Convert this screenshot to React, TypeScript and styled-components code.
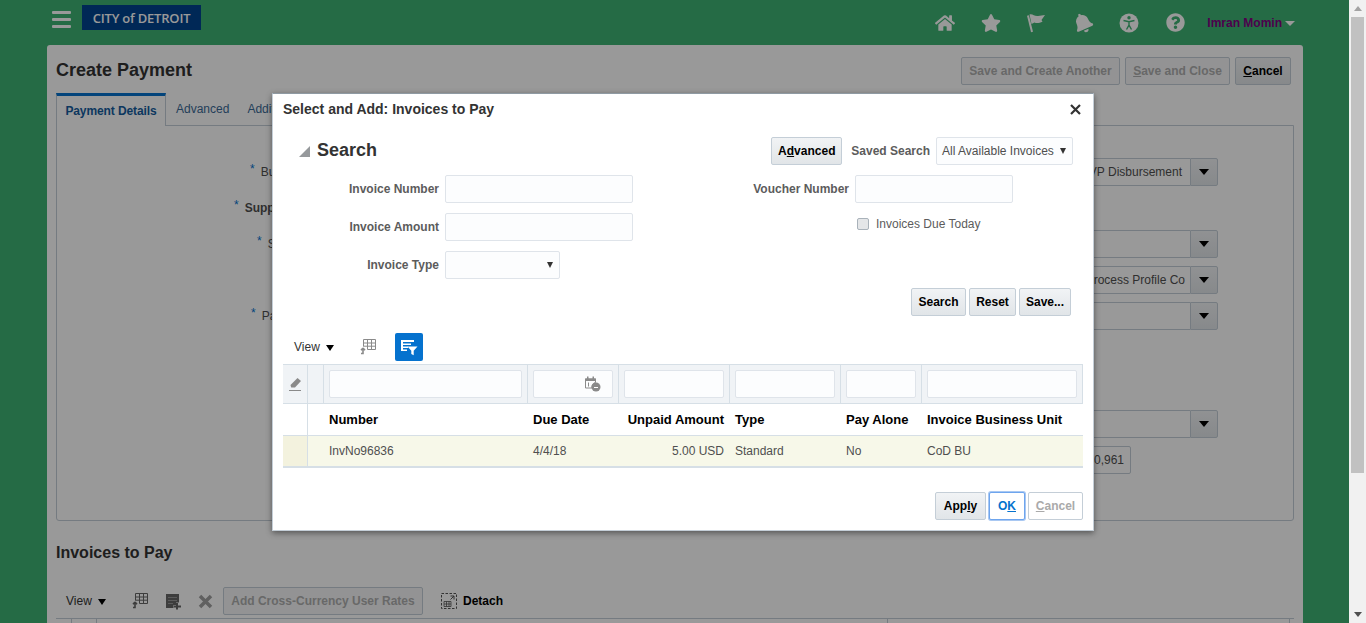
import React from "react";
import styled, { createGlobalStyle } from "styled-components";
import { FaHome, FaStar, FaBell, FaQuestionCircle } from "react-icons/fa";

const GlobalStyle = createGlobalStyle`
  html, body {
    margin: 0;
    padding: 0;
    overflow: hidden;
  }
  body {
    font-family: "Liberation Sans", Arial, sans-serif;
    font-size: 12px;
    color: #333;
  }
  * {
    box-sizing: border-box;
  }
`;

const Page = styled.div`
  display: flex;
  width: 1366px;
  height: 623px;
  overflow: hidden;
`;

const Main = styled.div`
  position: relative;
  flex: 1;
  padding: 0 46px 0 47px;
  background-color: #3eb273;
  overflow: hidden;
`;

const Scrollbar = styled.div`
  display: flex;
  flex-direction: column;
  align-items: center;
  width: 17px;
  background-color: #f1f1f1;
`;

const ScrollArrow = styled.div<{ $down?: boolean }>`
  display: flex;
  align-items: center;
  justify-content: center;
  height: 17px;
  flex: none;
  &::after {
    content: "";
    border-left: 4px solid transparent;
    border-right: 4px solid transparent;
    ${(p) =>
      p.$down
        ? "border-top: 5px solid #505050;"
        : "border-bottom: 5px solid #a3a3a3;"}
  }
`;

const ScrollThumb = styled.div`
  width: 13px;
  height: 456px;
  background-color: #c1c1c1;
`;

const ScrollTrack = styled.div`
  flex: 1;
`;

const Header = styled.header`
  display: flex;
  align-items: flex-start;
  height: 45px;
  color: #fff;
`;

const MenuButton = styled.div`
  display: flex;
  flex-direction: column;
  gap: 4px;
  width: 19px;
  margin: 11px 0 0 5px;
  span {
    display: block;
    height: 3px;
    border-radius: 1px;
    background-color: #fff;
  }
`;

const Logo = styled.div`
  display: flex;
  align-items: center;
  justify-content: center;
  width: 119px;
  height: 25px;
  margin: 5px 0 0 11px;
  background-color: #004390;
  color: #fff;
  font-family: "Open Sans", sans-serif;
  font-size: 13px;
  font-weight: 600;
  letter-spacing: -0.2px;
`;

const HeaderIcons = styled.nav`
  display: flex;
  align-items: center;
  height: 45px;
  margin-left: auto;
`;

const HeaderIcon = styled.div`
  display: flex;
  align-items: center;
  justify-content: center;
  width: 46px;
  height: 45px;
  font-size: 20px;
  color: #fff;
`;

const TiltedBell = styled(FaBell)`
  transform: rotate(-24deg);
`;

const UserName = styled.div`
  display: flex;
  align-items: center;
  gap: 3px;
  margin: 0 8px 0 9px;
  color: #800080;
  font-weight: 700;
  font-size: 12px;
  &::after {
    content: "";
    margin-top: 1px;
    border-left: 5px solid transparent;
    border-right: 5px solid transparent;
    border-top: 5px solid #fff;
  }
`;

const Panel = styled.main`
  height: 600px;
  padding: 0 9px;
  background-color: #fff;
  border-radius: 3px 3px 0 0;
`;

const TitleRow = styled.div`
  display: flex;
  align-items: flex-start;
  justify-content: space-between;
  height: 48px;
  padding: 12px 3px 0 0;
`;

const PageTitle = styled.h1`
  margin: 2px 0 0;
  font-size: 18px;
  line-height: 22px;
  font-weight: 700;
  color: #333;
`;

const ButtonRow = styled.div`
  display: flex;
  gap: 5px;
`;

const Button = styled.button<{ $w: number; $off?: boolean; $focus?: boolean }>`
  width: ${(p) => p.$w}px;
  height: 28px;
  padding: 0;
  flex: none;
  border: 1px solid ${(p) => (p.$focus ? "#6ea5ee" : "#c4ced7")};
  border-radius: 2px;
  background: ${(p) =>
    p.$off || p.$focus ? "#fff" : "linear-gradient(#f1f3f5, #e1e5e8)"};
  color: ${(p) => (p.$focus ? "#0572ce" : p.$off ? "#aaa" : "#000")};
  font-family: inherit;
  font-size: 12px;
  font-weight: 700;
  box-shadow: ${(p) => (p.$focus ? "0 0 0 1px #a9c8f2" : "none")};
`;

const GhostButton = styled(Button)`
  background: #f5f6f7;
  color: #aeaeae;
`;

const ToolbarButton = styled(GhostButton)`
  margin-left: 2px;
`;

const TabStrip = styled.div`
  display: flex;
  height: 32px;
`;

const Tab = styled.div<{ $active?: boolean }>`
  display: flex;
  align-items: center;
  justify-content: ${(p) => (p.$active ? "center" : "flex-start")};
  width: ${(p) => (p.$active ? "110px" : "auto")};
  height: ${(p) => (p.$active ? 33 : 32)}px;
  padding-left: ${(p) => (p.$active ? 0 : 10)}px;
  margin-right: ${(p) => (p.$active ? 0 : 8)}px;
  border: ${(p) => (p.$active ? "1px solid #c4ced7" : "none")};
  border-top: ${(p) => (p.$active ? "3px solid #0572ce" : "none")};
  border-bottom: none;
  background-color: #fff;
  color: ${(p) => (p.$active ? "#145c9e" : "#3b6a96")};
  font-weight: ${(p) => (p.$active ? 700 : 400)};
  letter-spacing: ${(p) => (p.$active ? "-0.1px" : "0")};
`;

// the last tab runs on under the dialog, so only its first letters show
const ClippedTab = styled(Tab)`
  width: 35px;
  overflow: hidden;
  white-space: nowrap;
`;

const TabBox = styled.section`
  display: flex;
  flex-direction: column;
  gap: 8px;
  height: 396px;
  padding: 32px 75px 0 0;
  border: 1px solid #c4ced7;
  border-radius: 0 0 3px 3px;
`;

const FormRow = styled.div`
  display: flex;
  align-items: center;
  justify-content: space-between;
  height: 28px;
  flex: none;
`;

const FormLabel = styled.label<{ $x: number; $bold?: boolean }>`
  padding-left: ${(p) => p.$x}px;
  font-weight: ${(p) => (p.$bold ? 700 : 400)};
  color: #4f4f4f;
  white-space: nowrap;
`;

const Star = styled.span`
  position: relative;
  top: -3px;
  margin-right: 6px;
  color: #0572ce;
  font-weight: 400;
`;

const Combo = styled.div`
  display: flex;
  width: 300px;
  height: 28px;
  margin-left: auto;
`;

const ComboText = styled.div<{ $pad?: number }>`
  display: flex;
  align-items: center;
  justify-content: flex-end;
  flex: 1;
  min-width: 0;
  padding-right: ${(p) => p.$pad ?? 5}px;
  overflow: hidden;
  border: 1px solid #c4ced7;
  border-right: none;
  border-radius: 2px 0 0 2px;
  white-space: nowrap;
  color: #4f4f4f;
`;

const ComboButton = styled.div`
  display: flex;
  align-items: center;
  justify-content: center;
  width: 28px;
  border: 1px solid #c4ced7;
  border-radius: 0 2px 2px 0;
  background: linear-gradient(#f1f3f5, #e1e5e8);
  &::after {
    content: "";
    border-left: 5px solid transparent;
    border-right: 5px solid transparent;
    border-top: 6px solid #000;
  }
`;

const ValueBox = styled.div`
  display: flex;
  align-items: center;
  justify-content: flex-end;
  width: 200px;
  height: 28px;
  margin: 0 87px 0 auto;
  padding-right: 6px;
  border: 1px solid #c4ced7;
  border-radius: 2px;
  color: #4f4f4f;
`;

const SectionTitle = styled.h2`
  margin: 21px 0 0;
  font-size: 16px;
  line-height: 22px;
  font-weight: 700;
  color: #333;
`;

const Toolbar = styled.div<{ $pad: number; $top: number }>`
  display: flex;
  align-items: center;
  height: 28px;
  margin-top: ${(p) => p.$top}px;
  padding-left: ${(p) => p.$pad}px;
  flex: none;
`;

const ViewMenu = styled.div`
  display: flex;
  align-items: center;
  gap: 6px;
  width: 58px;
  color: #333;
  &::after {
    content: "";
    margin-top: 2px;
    border-left: 4.5px solid transparent;
    border-right: 4.5px solid transparent;
    border-top: 6px solid #000;
  }
`;

const ToolIcon = styled.div<{ $w?: number; $active?: boolean }>`
  display: flex;
  align-items: center;
  justify-content: center;
  width: ${(p) => p.$w ?? 28}px;
  height: 28px;
  flex: none;
  margin-left: ${(p) => (p.$active ? 11 : 0)}px;
  border-radius: 2px;
  background-color: ${(p) => (p.$active ? "#0572ce" : "transparent")};
`;

const DetachLink = styled.div`
  display: flex;
  align-items: center;
  gap: 6px;
  margin-left: 18px;
  color: #000;
  font-weight: 700;
`;

const BottomTable = styled.div`
  display: grid;
  grid-template-columns: 16px 25px 791px 402px 1fr;
  height: 12px;
  margin-top: 3px;
  border-top: 1px solid #c4ced7;
`;

const BottomCell = styled.div`
  border-right: 1px solid #c4ced7;
`;

const Scrim = styled.div`
  position: absolute;
  inset: 0;
  background-color: rgba(0, 0, 0, 0.4);
`;

const Dialog = styled.div`
  position: absolute;
  left: 272px;
  top: 93px;
  width: 822px;
  height: 438px;
  padding: 0 10px;
  background-color: #fff;
  border: 1px solid #c4ced7;
  border-top-color: #8f9aa3;
  box-shadow: 0 2px 6px rgba(0, 0, 0, 0.45);
`;

const DialogTitleBar = styled.div`
  display: flex;
  align-items: center;
  justify-content: space-between;
  height: 30px;
  padding-right: 2px;
`;

const DialogTitle = styled.h3`
  margin: 0;
  font-size: 14px;
  font-weight: 700;
  color: #333;
`;

const SearchHead = styled.div`
  display: flex;
  align-items: center;
  height: 28px;
  margin-top: 13px;
  padding: 0 10px 0 16px;
`;

const SearchTitle = styled.div`
  display: flex;
  align-items: center;
  gap: 7px;
  margin-right: auto;
  padding-bottom: 2px;
  font-size: 18px;
  font-weight: 700;
  color: #333;
`;

const Disclosure = styled.span`
  width: 0;
  height: 0;
  margin-top: 3px;
  border-left: 11px solid transparent;
  border-bottom: 11px solid #96999c;
`;

const SavedLabel = styled.span`
  margin: 0 6px 0 9px;
  font-weight: 700;
  color: #5c5c5c;
`;

const Select = styled.div<{ $w: number }>`
  display: flex;
  align-items: center;
  justify-content: space-between;
  width: ${(p) => p.$w}px;
  height: 28px;
  padding: 0 6px 0 5px;
  flex: none;
  border: 1px solid #dfe4ea;
  border-radius: 2px;
  background-color: #fcfdfe;
  color: #4f4f4f;
  white-space: nowrap;
  &::after {
    content: "";
    margin-left: auto;
    border-left: 3px solid transparent;
    border-right: 3px solid transparent;
    border-top: 6px solid #333;
  }
`;

const SearchFields = styled.div`
  display: flex;
  margin-top: 10px;
`;

const FieldColumn = styled.div<{ $w?: number }>`
  display: flex;
  flex-direction: column;
  gap: 10px;
  width: ${(p) => (p.$w ? `${p.$w}px` : "auto")};
  flex: none;
`;

const Field = styled.div`
  display: flex;
  align-items: center;
  gap: 6px;
  height: 28px;
`;

const FieldLabel = styled.label<{ $w: number }>`
  width: ${(p) => p.$w}px;
  flex: none;
  text-align: right;
  font-weight: 700;
  color: #5c5c5c;
  white-space: nowrap;
`;

const TextInput = styled.div<{ $w: number }>`
  width: ${(p) => p.$w}px;
  height: 28px;
  flex: none;
  border: 1px solid #dfe4ea;
  border-radius: 2px;
  background-color: #fcfdfe;
`;

const CheckRow = styled.div`
  display: flex;
  align-items: center;
  gap: 7px;
  height: 22px;
  margin-left: 104px;
  color: #5c5c5c;
`;

const CheckBox = styled.span`
  width: 12px;
  height: 12px;
  border: 1px solid #a9b2ba;
  border-radius: 2px;
  background-color: #e4e6e8;
`;

const SearchActions = styled.div`
  display: flex;
  justify-content: flex-end;
  gap: 3px;
  margin-top: 9px;
  padding-right: 12px;
`;

const TableRow = styled.div<{ $h: number; $bg?: string }>`
  display: grid;
  grid-template-columns: 25px 16px 204px 91px 111px 111px 81px 161px;
  height: ${(p) => p.$h}px;
  background-color: ${(p) => p.$bg ?? "transparent"};
`;

const FilterRow = styled(TableRow)`
  margin-top: 3px;
  border-top: 1px solid #d6dfe6;
  border-bottom: 1px solid #d6dfe6;
`;

const FilterCell = styled.div<{ $plain?: boolean }>`
  display: flex;
  align-items: center;
  justify-content: ${(p) => (p.$plain ? "center" : "flex-start")};
  padding: ${(p) => (p.$plain ? 0 : "0 5px")};
  border-right: 1px solid #d6dfe6;
`;

const FilterInput = styled.div`
  display: flex;
  align-items: center;
  justify-content: flex-end;
  width: 100%;
  height: 28px;
  padding-right: 11px;
  border: 1px solid #dfe4ea;
  border-radius: 2px;
  background-color: #fcfdfe;
`;

const HeadCell = styled.div<{ $right?: boolean; $line?: boolean }>`
  display: flex;
  align-items: center;
  justify-content: ${(p) => (p.$right ? "flex-end" : "flex-start")};
  padding: 0 6px 0 5px;
  border-right: ${(p) => (p.$line ? "1px solid #d6dfe6" : "none")};
  border-bottom: 1px solid #d6dfe6;
  font-weight: 700;
  font-size: 13px;
  color: #000;
  white-space: nowrap;
`;

const DataRow = styled(TableRow)`
  border-bottom: 2px solid #d6dfe6;
`;

const DataCell = styled.div<{ $right?: boolean; $line?: boolean; $bg?: string }>`
  display: flex;
  align-items: center;
  justify-content: ${(p) => (p.$right ? "flex-end" : "flex-start")};
  padding: 0 6px 0 5px;
  border-right: ${(p) => (p.$line ? "1px solid #d6dfe6" : "none")};
  background-color: ${(p) => p.$bg ?? "transparent"};
  color: #4f4f4f;
  white-space: nowrap;
`;

const DialogFooter = styled.div`
  display: flex;
  justify-content: flex-end;
  gap: 3px;
  margin-top: 24px;
`;

// toolbar icons, drawn by hand since the packages have nothing close
const ExportIcon = ({ color }: { color: string }) => (
  <svg width="16" height="18" viewBox="0 0 16 18" fill="none">
    <path d="M3.500 1.500h12v10h-8M3.500 1.500v7M3.500 5h12M3.500 8.200h12M7.500 1.500v10M11.500 1.500v10" stroke={color} />
    <path d="M3 10v5.500H1M3 10 1 12.200M3 10l2 2.200" stroke={color} strokeWidth="1.600" />
  </svg>
);

const FilterIcon = () => (
  <svg width="18" height="17" viewBox="0 0 18 17">
    <path d="M1 1h13v2H3v1.500h8V6H3v1.500h5V9H3v1.500h4V12H1z" fill="#fff" />
    <path d="M7.500 7.500h10l-3.800 4.200v4.600l-2.400-1.400v-3.200z" fill="#fff" />
  </svg>
);

const EraserIcon = () => (
  <svg width="14" height="15" viewBox="0 0 14 15">
    <path d="M9.500 1 13 4 7 10.500H3.200L2.500 8z" fill="#8a8a8a" />
    <path d="M1 13.500h12" stroke="#8a8a8a" />
  </svg>
);

const CalendarClockIcon = () => (
  <svg width="17" height="16" viewBox="0 0 17 16">
    <path d="M1.500 3h10v3.500a5 5 0 0 0-3.500 5.500H1.500z" fill="none" stroke="#8a8a8a" />
    <path d="M1 2.500h11V5H1z" fill="#8a8a8a" />
    <path d="M3 .5h1.500V3H3zM8.500 .5H10V3H8.500z" fill="#8a8a8a" />
    <path d="M4.500 6.500v4" stroke="#8a8a8a" />
    <circle cx="12" cy="11" r="4.500" fill="#8a8a8a" />
    <path d="M10 11.500h4" stroke="#fff" />
  </svg>
);

const AddRowIcon = () => (
  <svg width="17" height="17" viewBox="0 0 17 17">
    <path d="M1 1h13v8.500h-3v2.500H8.500v3H1z" fill="#666" />
    <path d="M3 4.500h9M3 7.500h9M3 10.500h5" stroke="#999" />
    <path d="M12 10v6.500M9 13.500h7" stroke="#666" strokeWidth="2" />
  </svg>
);

const DeleteIcon = () => (
  <svg width="15" height="15" viewBox="0 0 15 15">
    <path d="M2 2l11 11M13 2 2 13" stroke="#a0a0a0" strokeWidth="3.500" />
  </svg>
);

const DetachIcon = () => (
  <svg width="16" height="16" viewBox="0 0 16 16" fill="none">
    <path d="M.5.500h15v15H.500z" stroke="#555" strokeDasharray="2.500 1.500" />
    <path d="M9.500 3h3.500v3.500M13 3 9.500 6.500" stroke="#555" />
    <path d="M3 8.500h7v5H3zM3 11h7M5.500 8.500v5M8 8.500v5" stroke="#555" strokeWidth=".8" />
  </svg>
);

const FlagIcon = () => (
  <svg width="20" height="20" viewBox="0 0 20 20">
    <path d="M1 2.500 5 19" stroke="#fff" strokeWidth="2" />
    <path d="M2.500 1.500c3-1 5 2 8.500 1.500l7-1-3.500 5 1 1.800c-3 1.200-6 1.700-8 .700l-3 1.500z" fill="#fff" />
  </svg>
);

const AccessIcon = () => (
  <svg width="20" height="20" viewBox="0 0 20 20">
    <circle cx="10" cy="10" r="9.500" fill="#fff" />
    <circle cx="10" cy="4.800" r="1.700" fill="#3eb273" />
    <path d="M4.500 7.500 10 8.800l5.500-1.300M10 8.800v3.400M10 12.200 7.500 16.500M10 12.200l2.500 4.300" stroke="#3eb273" strokeWidth="1.400" fill="none" />
  </svg>
);

export default function App() {
  return (
    <Page>
      <GlobalStyle />
      <Main>
        <Header>
          <MenuButton>
            <span />
            <span />
            <span />
          </MenuButton>
          <Logo>CITY of DETROIT</Logo>
          <HeaderIcons>
            <HeaderIcon><FaHome /></HeaderIcon>
            <HeaderIcon><FaStar size={20} /></HeaderIcon>
            <HeaderIcon><FlagIcon /></HeaderIcon>
            <HeaderIcon><TiltedBell size={20} /></HeaderIcon>
            <HeaderIcon><AccessIcon /></HeaderIcon>
            <HeaderIcon><FaQuestionCircle size={19} /></HeaderIcon>
            <UserName>Imran Momin</UserName>
          </HeaderIcons>
        </Header>

        <Panel>
          <TitleRow>
            <PageTitle>Create Payment</PageTitle>
            <ButtonRow>
              <GhostButton $w={159}>Save and Create Another</GhostButton>
              <GhostButton $w={105}><u>S</u>ave and Close</GhostButton>
              <Button $w={56}><u>C</u>ancel</Button>
            </ButtonRow>
          </TitleRow>

          <TabStrip>
            <Tab $active>Payment Details</Tab>
            <Tab>Advanced</Tab>
            <ClippedTab>Additional Information</ClippedTab>
          </TabStrip>

          <TabBox>
            <FormRow>
              <FormLabel $x={193}><Star>*</Star>Business Unit</FormLabel>
              <Combo><ComboText $pad={8}>VP Disbursement</ComboText><ComboButton /></Combo>
            </FormRow>
            <FormRow>
              <FormLabel $x={177} $bold><Star>*</Star>Supplier or Party</FormLabel>
            </FormRow>
            <FormRow>
              <FormLabel $x={200}><Star>*</Star>Supplier Site</FormLabel>
              <Combo><ComboText /><ComboButton /></Combo>
            </FormRow>
            <FormRow>
              <Combo><ComboText>Payment Process Profile Co</ComboText><ComboButton /></Combo>
            </FormRow>
            <FormRow>
              <FormLabel $x={194}><Star>*</Star>Payment Method</FormLabel>
              <Combo><ComboText /><ComboButton /></Combo>
            </FormRow>
            <FormRow />
            <FormRow />
            <FormRow>
              <Combo><ComboText /><ComboButton /></Combo>
            </FormRow>
            <FormRow>
              <ValueBox>20,961</ValueBox>
            </FormRow>
          </TabBox>

          <SectionTitle>Invoices to Pay</SectionTitle>
          <Toolbar $pad={10} $top={23}>
            <ViewMenu>View</ViewMenu>
            <ToolIcon $w={32}><ExportIcon color="#666" /></ToolIcon>
            <ToolIcon $w={34}><AddRowIcon /></ToolIcon>
            <ToolIcon $w={31}><DeleteIcon /></ToolIcon>
            <ToolbarButton $w={200}>Add Cross-Currency User Rates</ToolbarButton>
            <DetachLink><DetachIcon />Detach</DetachLink>
          </Toolbar>
          <BottomTable>
            <BottomCell />
            <BottomCell />
            <BottomCell />
            <BottomCell />
          </BottomTable>
        </Panel>

        <Scrim />

        <Dialog>
          <DialogTitleBar>
            <DialogTitle>Select and Add: Invoices to Pay</DialogTitle>
            <svg width="11" height="11" viewBox="0 0 11 11">
              <path d="M1 1l9 9M10 1l-9 9" stroke="#333" strokeWidth="2.200" />
            </svg>
          </DialogTitleBar>

          <SearchHead>
            <SearchTitle><Disclosure />Search</SearchTitle>
            <Button $w={71}>A<u>d</u>vanced</Button>
            <SavedLabel>Saved Search</SavedLabel>
            <Select $w={137}>All Available Invoices</Select>
          </SearchHead>

          <SearchFields>
            <FieldColumn $w={470}>
              <Field>
                <FieldLabel $w={156}>Invoice Number</FieldLabel>
                <TextInput $w={188} />
              </Field>
              <Field>
                <FieldLabel $w={156}>Invoice Amount</FieldLabel>
                <TextInput $w={188} />
              </Field>
              <Field>
                <FieldLabel $w={156}>Invoice Type</FieldLabel>
                <Select $w={115} />
              </Field>
            </FieldColumn>
            <FieldColumn>
              <Field>
                <FieldLabel $w={96}>Voucher Number</FieldLabel>
                <TextInput $w={158} />
              </Field>
              <CheckRow>
                <CheckBox />
                Invoices Due Today
              </CheckRow>
            </FieldColumn>
          </SearchFields>

          <SearchActions>
            <Button $w={55}>Search</Button>
            <Button $w={47}>Reset</Button>
            <Button $w={52}>Save...</Button>
          </SearchActions>

          <Toolbar $pad={11} $top={17}>
            <ViewMenu>View</ViewMenu>
            <ToolIcon $w={32}><ExportIcon color="#8a8a8a" /></ToolIcon>
            <ToolIcon $active><FilterIcon /></ToolIcon>
          </Toolbar>

          <FilterRow $h={40} $bg="#f0f3f6">
            <FilterCell $plain><EraserIcon /></FilterCell>
            <FilterCell $plain />
            <FilterCell><FilterInput /></FilterCell>
            <FilterCell><FilterInput><CalendarClockIcon /></FilterInput></FilterCell>
            <FilterCell><FilterInput /></FilterCell>
            <FilterCell><FilterInput /></FilterCell>
            <FilterCell><FilterInput /></FilterCell>
            <FilterCell><FilterInput /></FilterCell>
          </FilterRow>

          <TableRow $h={32}>
            <HeadCell $line />
            <HeadCell />
            <HeadCell>Number</HeadCell>
            <HeadCell>Due Date</HeadCell>
            <HeadCell $right>Unpaid Amount</HeadCell>
            <HeadCell>Type</HeadCell>
            <HeadCell>Pay Alone</HeadCell>
            <HeadCell>Invoice Business Unit</HeadCell>
          </TableRow>

          <DataRow $h={32} $bg="#f7f8e9">
            <DataCell $line $bg="#f3f2de" />
            <DataCell />
            <DataCell>InvNo96836</DataCell>
            <DataCell>4/4/18</DataCell>
            <DataCell $right>5.00 USD</DataCell>
            <DataCell>Standard</DataCell>
            <DataCell>No</DataCell>
            <DataCell>CoD BU</DataCell>
          </DataRow>

          <DialogFooter>
            <Button $w={51}>App<u>l</u>y</Button>
            <Button $w={36} $focus>O<u>K</u></Button>
            <Button $w={55} $off><u>C</u>ancel</Button>
          </DialogFooter>
        </Dialog>
      </Main>

      <Scrollbar>
        <ScrollArrow />
        <ScrollThumb />
        <ScrollTrack />
        <ScrollArrow $down />
      </Scrollbar>
    </Page>
  );
}
